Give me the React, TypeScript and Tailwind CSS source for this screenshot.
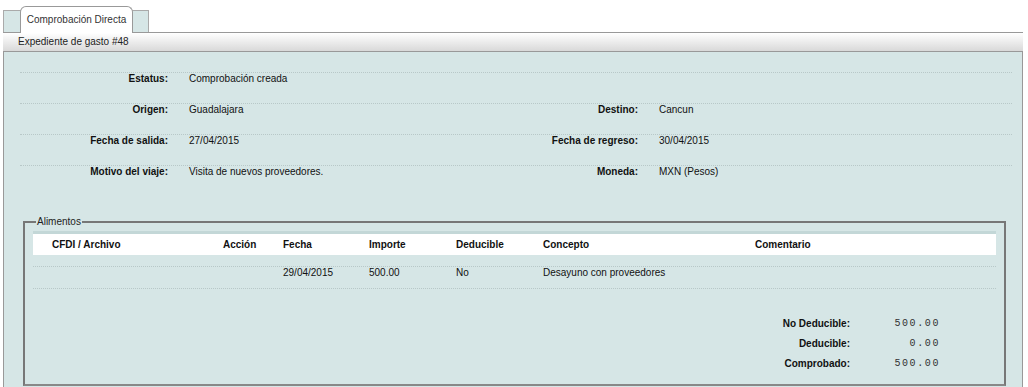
const info = [
  { l: "Estatus:", v: "Comprobación creada", l2: "", v2: "" },
  { l: "Origen:", v: "Guadalajara", l2: "Destino:", v2: "Cancun" },
  { l: "Fecha de salida:", v: "27/04/2015", l2: "Fecha de regreso:", v2: "30/04/2015" },
  { l: "Motivo del viaje:", v: "Visita de nuevos proveedores.", l2: "Moneda:", v2: "MXN (Pesos)" },
];

const cols = "grid grid-cols-[19px_171px_60px_86px_87px_87px_212px_1fr]";

const totals = [
  { l: "No Deducible:", v: "500.00" },
  { l: "Deducible:", v: "0.00" },
  { l: "Comprobado:", v: "500.00" },
];

export default function App() {
  return (
    <div className="h-[387px] w-[1028px] overflow-hidden bg-white pl-[3px] pr-[5px] text-[10px] leading-[12px] text-[#111] font-['Liberation_Sans',Arial,sans-serif]">
      {/* Tabs */}
      <div className="flex h-[32px] items-end">
        <div className="flex h-[22px] w-[146px] items-end border-l border-t border-r border-[#aaa] bg-[#d6e6e6]">
          <div className="relative -mb-px ml-[16px] flex h-[27px] w-[113px] items-center justify-center rounded-t-[6px] border border-b-0 border-[#999] bg-white text-[#333]">
            Comprobación Directa
          </div>
        </div>
      </div>

      {/* Header bar */}
      <div className="flex h-[20px] items-center border-y border-[#999] bg-gradient-to-b from-white to-[#d9d9d9] pl-[15px] text-[#222]">
        Expediente de gasto #48
      </div>

      {/* Body */}
      <div className="h-[340px] border-x border-[#999] bg-[#d6e6e6] pl-[16px] pr-[10px] pt-[20px]">
        <div className="w-[992px]">
          {info.map((r) => (
            <div
              key={r.l}
              className="grid h-[31px] grid-cols-[148px_322px_148px_1fr] border-t border-dotted border-[#b8c8c8] pt-[1px] leading-[10px]"
            >
              <div className="text-right font-bold">{r.l}</div>
              <div className="pl-[21px]">{r.v}</div>
              <div className="text-right font-bold">{r.l2}</div>
              <div className="pl-[21px]">{r.v2}</div>
            </div>
          ))}
        </div>

        <fieldset className="mt-[20px] ml-[3px] h-[170px] w-[982px] border-2 border-[#777] border-b-[#888] px-[8px] pt-0">
          <legend className="ml-[3px] px-[1px] leading-[12px] text-[#222]">Alimentos</legend>
          <div className="mt-[3px] w-[963px]">
            <div className={`${cols} h-[24px] items-center border-t-[3px] border-[#c3d7d7] bg-white font-bold`}>
              <div />
              <div>CFDI / Archivo</div>
              <div>Acción</div>
              <div>Fecha</div>
              <div>Importe</div>
              <div>Deducible</div>
              <div>Concepto</div>
              <div>Comentario</div>
            </div>
            <div className={`${cols} mt-[11px] h-[23px] border-y border-dotted border-[#b8c8c8] pt-[1px] leading-[10px]`}>
              <div />
              <div />
              <div />
              <div>29/04/2015</div>
              <div>500.00</div>
              <div>No</div>
              <div>Desayuno con proveedores</div>
              <div />
            </div>
          </div>

          <div className="mt-[28px] flex flex-col gap-[7px]">
            {totals.map((t) => (
              <div key={t.l} className="flex h-[13px] items-center">
                <div className="w-[817px] text-right font-bold">{t.l}</div>
                <div className="w-[90px] text-right text-[10px] tracking-[1.6px] text-[#333] font-['Liberation_Mono',monospace]">{t.v}</div>
              </div>
            ))}
          </div>
        </fieldset>
      </div>
    </div>
  );
}
